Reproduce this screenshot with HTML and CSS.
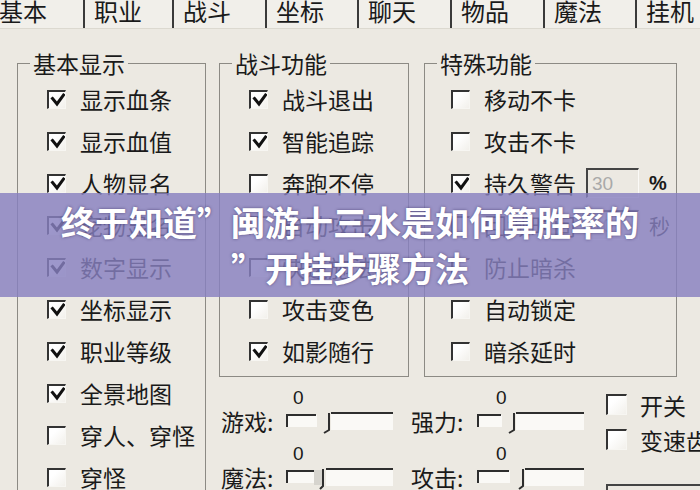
FILE: index.html
```html
<!DOCTYPE html>
<html lang="zh-CN">
<head>
<meta charset="utf-8">
<title>基本设置</title>
<link rel="stylesheet" href="styles.css">
</head>
<body>
<div class="tabs">
  <div class="tab">基本</div>
  <div class="tab">职业</div>
  <div class="tab">战斗</div>
  <div class="tab">坐标</div>
  <div class="tab">聊天</div>
  <div class="tab">物品</div>
  <div class="tab">魔法</div>
  <div class="tab">挂机</div>
</div>

<div class="main">
  <fieldset class="group g1">
    <legend>基本显示</legend>
    <div class="rows">
      <div class="row"><span class="cb"><svg viewBox="0 0 16 16"><path d="M3.5 6.5L8 12L14.5 3" /></svg></span><span>显示血条</span></div>
      <div class="row"><span class="cb"><svg viewBox="0 0 16 16"><path d="M3.5 6.5L8 12L14.5 3" /></svg></span><span>显示血值</span></div>
      <div class="row"><span class="cb"><svg viewBox="0 0 16 16"><path d="M3.5 6.5L8 12L14.5 3" /></svg></span><span>人物显名</span></div>
      <div class="row"><span class="cb"><svg viewBox="0 0 16 16"><path d="M3.5 6.5L8 12L14.5 3" /></svg></span><span>宠物显名</span></div>
      <div class="row"><span class="cb"><svg viewBox="0 0 16 16"><path d="M3.5 6.5L8 12L14.5 3" /></svg></span><span>数字显示</span></div>
      <div class="row"><span class="cb"><svg viewBox="0 0 16 16"><path d="M3.5 6.5L8 12L14.5 3" /></svg></span><span>坐标显示</span></div>
      <div class="row"><span class="cb"><svg viewBox="0 0 16 16"><path d="M3.5 6.5L8 12L14.5 3" /></svg></span><span>职业等级</span></div>
      <div class="row"><span class="cb"><svg viewBox="0 0 16 16"><path d="M3.5 6.5L8 12L14.5 3" /></svg></span><span>全景地图</span></div>
      <div class="row"><span class="cb"></span><span>穿人、穿怪</span></div>
      <div class="row"><span class="cb"></span><span>穿怪</span></div>
    </div>
  </fieldset>

  <div class="right">
    <div class="groups">
      <fieldset class="group g2">
        <legend>战斗功能</legend>
        <div class="rows">
          <div class="row"><span class="cb"><svg viewBox="0 0 16 16"><path d="M3.5 6.5L8 12L14.5 3" /></svg></span><span>战斗退出</span></div>
          <div class="row"><span class="cb"><svg viewBox="0 0 16 16"><path d="M3.5 6.5L8 12L14.5 3" /></svg></span><span>智能追踪</span></div>
          <div class="row"><span class="cb"></span><span>奔跑不停</span></div>
          <div class="row"><span class="cb"></span><span>自动攻击</span></div>
          <div class="row"><span class="cb"></span><span>快速施法</span></div>
          <div class="row"><span class="cb"></span><span>攻击变色</span></div>
          <div class="row"><span class="cb"><svg viewBox="0 0 16 16"><path d="M3.5 6.5L8 12L14.5 3" /></svg></span><span>如影随行</span></div>
        </div>
      </fieldset>

      <fieldset class="group g3">
        <legend>特殊功能</legend>
        <div class="rows">
          <div class="row"><span class="cb"></span><span>移动不卡</span></div>
          <div class="row"><span class="cb"></span><span>攻击不卡</span></div>
          <div class="row"><span class="cb"><svg viewBox="0 0 16 16"><path d="M3.5 6.5L8 12L14.5 3" /></svg></span><span>持久警告</span><span class="field">30</span><span class="unit">%</span></div>
          <div class="row"><span class="cb"></span><span>回城时间</span><span class="field">10</span><span class="unit sec">秒</span></div>
          <div class="row"><span class="cb"></span><span>防止暗杀</span></div>
          <div class="row"><span class="cb"></span><span>自动锁定</span></div>
          <div class="row"><span class="cb"></span><span>暗杀延时</span></div>
        </div>
      </fieldset>
    </div>

    <div class="lower">
      <div class="sliders">
        <div class="slider">
          <span class="zero">0</span>
          <span class="slabel">游戏:</span>
          <svg class="track" viewBox="0 0 110 24">
            <rect x="1" y="6" width="30" height="12" class="fill"/>
            <rect x="45" y="4" width="62" height="17" class="fill"/>
            <path d="M1 18V6H30M45 4H107M43 4V21L38 24" class="edge"/>
          </svg>
        </div>
        <div class="slider">
          <span class="zero far">0</span>
          <span class="slabel">强力:</span>
          <svg class="track" viewBox="0 0 110 24">
            <rect x="2" y="6" width="24" height="12" class="fill"/>
            <rect x="40" y="4" width="68" height="17" class="fill"/>
            <path d="M2 18V6H25M40 4H108M38 4V21L33 24" class="edge"/>
          </svg>
        </div>
        <div class="slider">
          <span class="zero">0</span>
          <span class="slabel">魔法:</span>
          <svg class="track" viewBox="0 0 110 24">
            <rect x="1" y="6" width="28" height="12" class="fill"/>
            <rect x="28" y="5" width="9" height="15" class="thumb"/>
            <rect x="40" y="4" width="67" height="17" class="fill"/>
            <path d="M1 18V6H28M40 4H107M37 4V21L34 24" class="edge"/>
          </svg>
        </div>
        <div class="slider">
          <span class="zero far">0</span>
          <span class="slabel">攻击:</span>
          <svg class="track" viewBox="0 0 110 24">
            <rect x="2" y="6" width="32" height="12" class="fill"/>
            <rect x="49" y="4" width="59" height="17" class="fill"/>
            <path d="M2 18V6H33M49 4H108M47 4V21L43 24" class="edge"/>
          </svg>
        </div>
      </div>

      <div class="toggles">
        <div class="toggle"><span class="cb"></span><span>开关</span></div>
        <div class="toggle"><span class="cb"></span><span>变速齿轮</span></div>
        <div class="box"></div>
      </div>
    </div>
  </div>
</div>

<div class="banner">终于知道”闽游十三水是如何算胜率的<br>”开挂步骤方法</div>
</body>
</html>
```

FILE: styles.css
```css
body {
  margin: 0;
  width: 700px;
  height: 490px;
  overflow: hidden;
  position: relative;
  background: #ece9e2;
  font-family: "Noto Sans CJK SC", "Noto Sans", sans-serif;
  color: #1a1a1a;
}

.tabs {
  display: flex;
  height: 28px;
  background: #f1efea;
  border-bottom: 1px solid #dcd9d0;
  overflow: hidden;
  white-space: nowrap;
}

.tab {
  flex: none;
  box-sizing: border-box;
  height: 28px;
  padding-left: 9px;
  border-left: 2px solid #3a3a3a;
  font-size: 24px;
  line-height: 21px;
}

.tab:nth-child(1) { width: 87px; margin-left: -4px; border-left: none; padding-left: 3px; }
.tab:nth-child(2) { width: 89px; }
.tab:nth-child(3) { width: 93px; }
.tab:nth-child(4) { width: 92px; }
.tab:nth-child(5) { width: 93px; }
.tab:nth-child(6) { width: 93px; }
.tab:nth-child(7) { width: 92px; }
.tab:nth-child(8) { width: 70px; }

.main {
  display: flex;
  align-items: flex-start;
  gap: 13px;
  padding-left: 17px;
  margin-top: 21px;
}

.group {
  flex: none;
  margin: 0;
  padding: 0 0 4px 0;
  min-width: 0;
  box-sizing: border-box;
  border: 1px solid #8c8a84;
}

.group legend {
  margin-left: 12px;
  padding: 0 3px;
  font-size: 23px;
  line-height: 26px;
}

.g1 { width: 189px; }
.g2 { width: 190px; }
.g3 { width: 253px; }

.right {
  flex: none;
  display: flex;
  flex-direction: column;
}

.groups {
  display: flex;
  gap: 15px;
}

.rows { padding-top: 2px; }

.row {
  display: flex;
  align-items: center;
  height: 42px;
  padding-left: 29px;
  gap: 14px;
  font-size: 23px;
  white-space: nowrap;
}

.g3 .row { padding-left: 26px; }

.cb {
  flex: none;
  display: flex;
  width: 19px;
  height: 19px;
  box-sizing: border-box;
  border-top: 2px solid #333;
  border-left: 2px solid #333;
  border-right: 1px solid #f7f6f2;
  border-bottom: 1px solid #f7f6f2;
  background: linear-gradient(135deg, #ffffff 30%, #f2f0eb);
}

.cb svg {
  width: 16px;
  height: 16px;
}

.cb svg path {
  fill: none;
  stroke: #111;
  stroke-width: 3;
  stroke-linejoin: miter;
  stroke-linecap: square;
}

.field {
  width: 53px;
  height: 30px;
  box-sizing: border-box;
  margin-left: -4px;
  padding-left: 4px;
  border-top: 2px solid #444;
  border-left: 2px solid #444;
  border-right: 1px solid #fbfaf7;
  border-bottom: 1px solid #fbfaf7;
  font-family: "Liberation Sans", sans-serif;
  font-size: 19px;
  line-height: 27px;
  color: #a9a9a9;
}

.unit {
  margin-left: -4px;
  font-family: "Liberation Sans", sans-serif;
  font-size: 20px;
  font-weight: bold;
}

.unit.sec {
  font-family: "Noto Sans CJK SC", sans-serif;
  font-weight: normal;
  font-size: 21px;
}

.lower {
  display: flex;
  align-items: flex-start;
  padding: 10px 0 0 2px;
}

.sliders {
  flex: none;
  display: grid;
  align-content: start;
  grid-template-columns: 175px 175px;
  column-gap: 15px;
  row-gap: 10px;
}

.slider {
  display: grid;
  grid-template-columns: 65px 110px;
  grid-template-rows: 22px 24px;
}

.zero {
  grid-column: 2;
  grid-row: 1;
  padding-left: 7px;
  font-family: "Liberation Sans", sans-serif;
  font-size: 19px;
  line-height: 22px;
}

.zero.far { padding-left: 20px; }

.slabel {
  grid-column: 1;
  grid-row: 2;
  font-size: 23px;
  line-height: 24px;
  white-space: nowrap;
}

.track {
  grid-column: 2;
  grid-row: 2;
  width: 110px;
  height: 24px;
  overflow: visible;
}

.track .fill { fill: #faf9f6; }
.track .thumb { fill: #d6d4ce; }
.track .edge {
  fill: none;
  stroke: #2e2e2e;
  stroke-width: 2;
}

.toggles {
  flex: none;
  margin-left: 20px;
  display: flex;
  flex-direction: column;
}

.toggle {
  display: flex;
  align-items: center;
  height: 35px;
  gap: 13px;
  font-size: 23px;
  white-space: nowrap;
}

.toggle .cb {
  width: 21px;
  height: 21px;
}

.box {
  margin-top: 27px;
  width: 120px;
  height: 20px;
  border-top: 2px solid #444;
  border-left: 2px solid #444;
}

.banner {
  position: absolute;
  left: 0;
  top: 193px;
  width: 700px;
  height: 104px;
  box-sizing: border-box;
  padding-top: 6px;
  background: rgba(135, 128, 191, 0.82);
  color: #fff;
  font-weight: 700;
  font-size: 34px;
  line-height: 46px;
  text-align: center;
  white-space: nowrap;
  text-shadow: 0 0 3px rgba(40, 30, 80, 0.6);
}
```
